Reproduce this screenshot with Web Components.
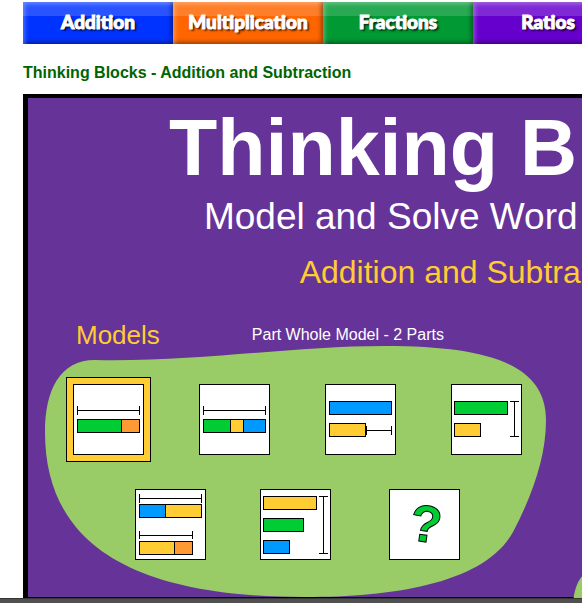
<!DOCTYPE html>
<html lang="en">
<head>
<meta charset="utf-8">
<title>Thinking Blocks - Addition and Subtraction</title>
<style>
  html, body { margin: 0; height: 100%; }
  body { background: #fff; overflow: hidden; font-family: "Liberation Sans", Arial, sans-serif; }
</style>
</head>
<body>
<blocks-page></blocks-page>

<template id="t-page">
  <style>
    :host { display: flex; flex-direction: column; height: 100vh; }
    main { flex: 1; min-height: 0; overflow: hidden; padding: 2px 0 0 23px; }
    nav { display: flex; }
    h1 { margin: 0; padding: 19px 0 11px; font-size: 16px; line-height: 20px; color: #006400; }
    footer { height: 4px; background: #505050; border-top: 1px solid #363636; }
  </style>
  <main>
    <nav aria-label="Topics">
      <topic-tab color="#0033ff">Addition</topic-tab>
      <topic-tab color="#ff6600">Multiplication</topic-tab>
      <topic-tab color="#009933">Fractions</topic-tab>
      <topic-tab color="#6600cc">Ratios</topic-tab>
    </nav>
    <h1>Thinking Blocks - Addition and Subtraction</h1>
    <game-stage>
      <span slot="title">Thinking Blocks</span>
      <span slot="tagline">Model and Solve Word Problems</span>
      <span slot="topic">Addition and Subtraction</span>
      <model-picker></model-picker>
    </game-stage>
  </main>
  <footer></footer>
</template>

<template id="t-tab">
  <style>
    :host { display: block; flex: 0 0 150px; }
    a {
      display: block; height: 42px; line-height: 40px; text-align: center; text-decoration: none;
      font-family: Lato, "Open Sans", sans-serif; font-weight: 900; font-size: 19px; color: #fff;
      -webkit-text-stroke: 1px #fff;
      text-shadow: 1px 1px 1px rgba(0,0,0,.7), 2px 2px 2px rgba(0,0,0,.6);
      background: linear-gradient(rgba(255,255,255,.16) 14px, transparent 14px) var(--tab);
      box-shadow: inset 4px 4px 4px -2px rgba(255,255,255,.3), inset -4px -4px 4px -2px rgba(0,0,0,.4);
    }
  </style>
  <a href="#"><slot></slot></a>
</template>

<template id="t-stage">
  <style>
    :host {
      display: block; min-width: 892px; background: #663399; color: #fff; white-space: nowrap;
      border: 5px solid #000; border-top-width: 4px; padding-top: 10px; text-align: center;
    }
    h2, p { margin: 0; font-weight: normal; }
    h2 { font-size: 79px; line-height: 80px; font-weight: bold; }
    .tagline { margin-top: 8px; font-size: 37px; line-height: 42px; }
    .topic { margin-top: 16px; font-size: 32px; line-height: 36px; color: #ffcc33; }
  </style>
  <h2><slot name="title"></slot></h2>
  <p class="tagline"><slot name="tagline"></slot></p>
  <p class="topic"><slot name="topic"></slot></p>
  <slot></slot>
</template>

<template id="t-picker">
  <style>
    :host { display: block; margin-top: 30px; padding-left: 17px; text-align: left; }
    header { display: flex; align-items: center; gap: 92px; padding-left: 31px; }
    h3, p { margin: 0; font-weight: normal; }
    h3 { font-size: 26px; line-height: 30px; color: #ffcc33; }
    p { font-size: 16px; line-height: 20px; }
    .panel { display: grid; margin-top: -4px; }
    .panel > * { grid-area: 1 / 1; }
    .blob { display: block; overflow: visible; }
    .rows { display: grid; align-content: start; gap: 34px; padding-top: 38px; }
    .row { display: grid; }
    .first { grid-template-columns: repeat(4, 126px); padding-left: 28px; }
    .second { grid-template-columns: 125px 129px 71px; padding-left: 90px; }
    .gr { fill: #00cc33; } .or { fill: #ff9933; } .ye { fill: #ffcc33; } .bl { fill: #0099ff; }
    model-card svg { display: block; stroke: #000; fill: none; }
    text { font: bold 52px "Liberation Sans", Arial, sans-serif; text-anchor: middle; }
  </style>
  <header><h3>Models</h3><p>Part Whole Model - 2 Parts</p></header>
  <div class="panel">
    <svg class="blob" width="501" height="251" viewBox="45 346 501 251" fill="#99cc66" aria-hidden="true">
      <path d="M45 432C45 390 60 360 95 360C200 362 290 346 385 346C490 346 546 365 546 420C546 455 534 492 513 532C485 583 395 597 305 597C150 597 45 555 45 432Z"/>
      <path d="M572 625C572 597 575 584 583 575C600 558 660 560 760 560V700H600Z"/>
    </svg>
    <div class="rows">
      <div class="row first">
        <model-card selected label="Part whole model, 2 parts">
          <svg width="71" height="71"><path d="M4.5 26.5H66.5M4.5 22V31M66.5 22V31"/><rect class="gr" x="4.5" y="35.5" width="44" height="13"/><rect class="or" x="48.5" y="35.5" width="18" height="13"/></svg>
        </model-card>
        <model-card label="Part whole model, 3 parts">
          <svg width="71" height="71"><path d="M4.5 26.5H66.5M4.5 22V31M66.5 22V31"/><rect class="gr" x="4.5" y="35.5" width="27" height="13"/><rect class="ye" x="31.5" y="35.5" width="13" height="13"/><rect class="bl" x="44.5" y="35.5" width="22" height="13"/></svg>
        </model-card>
        <model-card label="Comparison, difference">
          <svg width="71" height="71"><rect class="bl" x="4.5" y="17.5" width="62" height="13"/><rect class="ye" x="4.5" y="39.5" width="36" height="13"/><path d="M41.5 46.5H66.5M41.5 42V51M66.5 42V51"/></svg>
        </model-card>
        <model-card label="Comparison, total">
          <svg width="71" height="71"><rect class="gr" x="3.5" y="17.5" width="53" height="13"/><rect class="ye" x="3.5" y="39.5" width="26" height="13"/><path d="M63.5 17.5V52.5M59 17.5H68M59 52.5H68"/></svg>
        </model-card>
      </div>
      <div class="row second">
        <model-card label="Two part whole models">
          <svg width="71" height="71"><path d="M4.5 9.5H66.5M4.5 5V14M66.5 5V14M4.5 46.5H57.5M4.5 42V50M57.5 42V50"/><rect class="bl" x="4.5" y="15.5" width="26" height="13"/><rect class="ye" x="30.5" y="15.5" width="36" height="13"/><rect class="ye" x="4.5" y="52.5" width="35" height="13"/><rect class="or" x="39.5" y="52.5" width="18" height="13"/></svg>
        </model-card>
        <model-card label="Comparison, 3 quantities">
          <svg width="71" height="71"><rect class="ye" x="3.5" y="7.5" width="53" height="13"/><rect class="gr" x="3.5" y="29.5" width="40" height="13"/><rect class="bl" x="3.5" y="51.5" width="26" height="13"/><path d="M63.5 7.5V64.5M59 7.5H68M59 64.5H68"/></svg>
        </model-card>
        <model-card label="Mixed problems">
          <svg width="71" height="71"><text class="gr" x="37" y="53" transform="rotate(8 37 35)">?</text></svg>
        </model-card>
      </div>
    </div>
  </div>
</template>

<template id="t-card">
  <style>
    :host { display: block; width: 71px; height: 71px; }
    button { display: block; width: 71px; height: 71px; padding: 0; border: 0; background: #fff; box-shadow: inset 0 0 0 1px #000; cursor: pointer; }
    :host([selected]) button { box-shadow: inset 0 0 0 1px #000, 0 0 0 6px #ffcc33, 0 0 0 7px #000; }
  </style>
  <button type="button"><slot></slot></button>
</template>

<script>
  class TemplateElement extends HTMLElement {
    connectedCallback() {
      if (this.shadowRoot) return;
      const root = this.attachShadow({ mode: "open" });
      root.append(document.getElementById(this.constructor.template).content.cloneNode(true));
      this.ready(root);
    }
    ready() {}
  }
  class TopicTab extends TemplateElement {
    static template = "t-tab";
    ready() { this.style.setProperty("--tab", this.getAttribute("color")); }
  }
  class ModelCard extends TemplateElement {
    static template = "t-card";
    ready(root) {
      const button = root.querySelector("button");
      button.setAttribute("aria-label", this.getAttribute("label"));
      button.setAttribute("aria-pressed", this.hasAttribute("selected"));
    }
  }
  class ModelPicker extends TemplateElement { static template = "t-picker"; }
  class GameStage extends TemplateElement { static template = "t-stage"; }
  class BlocksPage extends TemplateElement { static template = "t-page"; }
  customElements.define("topic-tab", TopicTab);
  customElements.define("model-card", ModelCard);
  customElements.define("model-picker", ModelPicker);
  customElements.define("game-stage", GameStage);
  customElements.define("blocks-page", BlocksPage);
</script>
</body>
</html>
